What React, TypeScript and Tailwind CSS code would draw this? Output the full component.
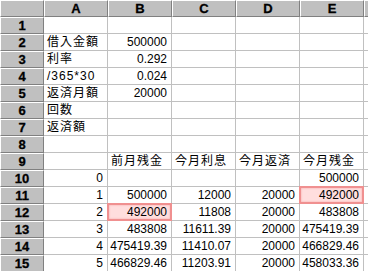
import React from "react";

type Cell = { v: string; align?: "l" | "r"; hl?: boolean };

const L = (v: string): Cell => ({ v, align: "l" });
const R = (v: string, hl = false): Cell => ({ v, align: "r", hl });
const E: Cell = { v: "" };

const rows: Cell[][] = [
  [E, E, E, E, E],
  [L("借入金額"), R("500000"), E, E, E],
  [L("利率"), R("0.292"), E, E, E],
  [L("/365*30"), R("0.024"), E, E, E],
  [L("返済月額"), R("20000"), E, E, E],
  [L("回数"), E, E, E, E],
  [L("返済額"), E, E, E, E],
  [E, E, E, E, E],
  [E, L("前月残金"), L("今月利息"), L("今月返済"), L("今月残金")],
  [R("0"), E, E, E, R("500000")],
  [R("1"), R("500000"), R("12000"), R("20000"), R("492000", true)],
  [R("2"), R("492000", true), R("11808"), R("20000"), R("483808")],
  [R("3"), R("483808"), R("11611.39"), R("20000"), R("475419.39")],
  [R("4"), R("475419.39"), R("11410.07"), R("20000"), R("466829.46")],
  [R("5"), R("466829.46"), R("11203.91"), R("20000"), R("458033.36")],
];

const font = { fontFamily: '"Liberation Sans", "Noto Sans CJK JP", sans-serif' };

function HeaderCell({ children, last }: { children?: React.ReactNode; last?: boolean }) {
  return (
    <div
      className={`h-[17px] bg-[#c0c0c0] border-t border-l border-t-white border-l-white border-b border-b-[#808080] ${last ? "" : "border-r border-r-[#808080]"} flex items-center justify-center text-[13px] font-bold text-black leading-none [-webkit-text-stroke:0.3px_black]`}
    >
      {children}
    </div>
  );
}

export default function App() {
  const cols = ["A", "B", "C", "D", "E"];
  return (
    <div className="w-[368px] h-[271px] overflow-hidden bg-white" style={font}>
      <div className="grid grid-cols-[44px_64px_64px_64px_64px_64px_1fr]">
        <HeaderCell />
        {cols.map((c) => (
          <HeaderCell key={c}>{c}</HeaderCell>
        ))}
        <HeaderCell last />
        {rows.map((r, i) => (
          <React.Fragment key={i}>
            <HeaderCell>{i + 1}</HeaderCell>
            {r.map((c, j) => (
              <div
                key={j}
                className="relative h-[17px] border-r border-b border-[#c0c0c0] text-[12px] text-black leading-none"
              >
                {c.hl && (
                  <div className="absolute -left-px -top-px w-[65px] h-[18px] bg-[#ffdede] border-2 border-[#f09090] shadow-[inset_0_0_2px_#f4a0a0]" />
                )}
                <div
                  className={`absolute inset-0 flex items-center whitespace-nowrap ${
                    c.align === "r" ? "justify-end pr-[4px]" : "justify-start pl-[3px] tracking-[1px]"
                  }`}
                >
                  {c.v}
                </div>
              </div>
            ))}
            <div className="h-[17px] border-b border-[#c0c0c0]" />
          </React.Fragment>
        ))}
      </div>
    </div>
  );
}
